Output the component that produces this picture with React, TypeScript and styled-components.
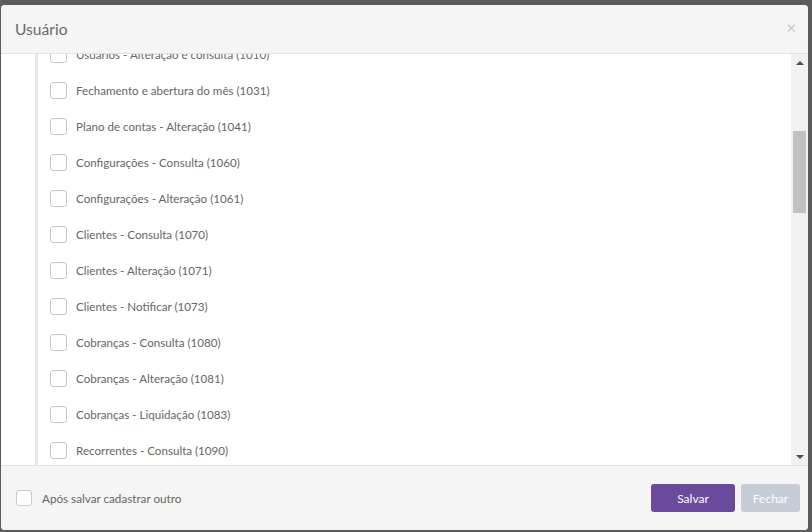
import React, { useLayoutEffect, useRef } from "react";
import styled, { createGlobalStyle } from "styled-components";

const GlobalStyle = createGlobalStyle`
  html, body {
    margin: 0;
    padding: 0;
    width: 812px;
    height: 532px;
    overflow: hidden;
    font-family: Lato, "Open Sans", sans-serif;
  }
`;

const permissions = [
  "Empresa - Consulta (1000)",
  "Empresa - Alteração (1001)",
  "Painel - Consulta (1002)",
  "Relatórios - Consulta (1003)",
  "Relatórios - Exportação (1004)",
  "Contas bancárias - Consulta (1005)",
  "Contas bancárias - Alteração (1006)",
  "Usuários - Consulta (1009)",
  "Usuários - Alteração e consulta (1010)",
  "Fechamento e abertura do mês (1031)",
  "Plano de contas - Alteração (1041)",
  "Configurações - Consulta (1060)",
  "Configurações - Alteração (1061)",
  "Clientes - Consulta (1070)",
  "Clientes - Alteração (1071)",
  "Clientes - Notificar (1073)",
  "Cobranças - Consulta (1080)",
  "Cobranças - Alteração (1081)",
  "Cobranças - Liquidação (1083)",
  "Recorrentes - Consulta (1090)",
  "Recorrentes - Alteração (1091)",
  "Fornecedores - Consulta (1100)",
  "Fornecedores - Alteração (1101)",
  "Contas a pagar - Consulta (1110)",
  "Contas a pagar - Alteração (1111)",
  "Contas a pagar - Liquidação (1113)",
  "Contas a receber - Consulta (1120)",
  "Contas a receber - Alteração (1121)",
  "Contas a receber - Liquidação (1123)",
  "Fluxo de caixa - Consulta (1130)",
];

const Backdrop = styled.div`
  width: 812px;
  height: 532px;
  box-sizing: border-box;
  padding: 5px 4px 2px 1px;
  background: #5c5c5c;
  display: flex;
`;

const Modal = styled.div`
  flex: 1;
  display: flex;
  flex-direction: column;
  background: #fff;
  border-radius: 4px;
  overflow: hidden;
`;

const Header = styled.div`
  height: 48px;
  flex-shrink: 0;
  display: flex;
  align-items: center;
  justify-content: space-between;
  padding: 0 12px 0 14px;
  background: #f5f5f5;
  border-bottom: 1px solid #e2e2e2;
`;

const Title = styled.h4`
  margin: 0;
  font-size: 15.6px;
  font-weight: 400;
  color: #6a6a6a;
`;

const Close = styled.span`
  font-size: 17px;
  color: #c8c8c8;
  line-height: 1;
  margin-top: -4px;
`;

const Body = styled.div`
  flex: 1;
  min-height: 0;
  display: flex;
`;

const Viewport = styled.div`
  flex: 1;
  overflow: hidden;
  padding-left: 34px;
`;

const List = styled.div`
  border-left: 3px solid #e8e8e8;
  padding: 10px 0;
`;

const Item = styled.label`
  height: 36px;
  display: flex;
  align-items: center;
  padding-left: 12px;
  font-size: 11.6px;
  color: #666;
`;

const Box = styled.span<{ $size: number; $gap: number }>`
  width: ${(p) => p.$size}px;
  height: ${(p) => p.$size}px;
  border: 1px solid #c9c9c9;
  border-radius: 3px;
  background: #fff;
  margin-right: ${(p) => p.$gap}px;
  flex-shrink: 0;
`;

const Scrollbar = styled.div`
  width: 17px;
  flex-shrink: 0;
  display: flex;
  flex-direction: column;
  background: #f1f1f1;
`;

const Arrow = styled.div`
  height: 17px;
  display: flex;
  align-items: center;
  justify-content: center;
`;

const Track = styled.div`
  flex: 1;
  padding-top: 60px;
`;

const Thumb = styled.div`
  height: 82px;
  margin: 0 2px;
  background: #c1c1c1;
`;

const Footer = styled.div`
  height: 64px;
  flex-shrink: 0;
  display: flex;
  align-items: center;
  justify-content: space-between;
  padding: 0 8px 0 15px;
  background: #f5f5f5;
  border-top: 1px solid #e2e2e2;
`;

const Another = styled.label`
  display: flex;
  align-items: center;
  font-size: 11.7px;
  color: #666;
`;

const Actions = styled.div`
  display: flex;
  gap: 6px;
`;

const Button = styled.button<{ $primary?: boolean }>`
  height: 28px;
  padding: 0;
  width: ${(p) => (p.$primary ? 84 : 59)}px;
  border: none;
  border-radius: 3px;
  font-family: Lato, "Open Sans", sans-serif;
  font-size: 12px;
  color: #fff;
  background: ${(p) => (p.$primary ? "#6a4b9b" : "#c8ccd7")};
`;

const Triangle = ({ up }: { up?: boolean }) => (
  <svg width="8" height="4" viewBox="0 0 8 4">
    <path d={up ? "M0 4h8L4 0z" : "M0 0h8L4 4z"} fill="#505050" />
  </svg>
);

export default function App() {
  const viewRef = useRef<HTMLDivElement>(null);

  useLayoutEffect(() => {
    if (viewRef.current) viewRef.current.scrollTop = 10 + 8 * 36 + 18;
  }, []);

  return (
    <>
      <GlobalStyle />
      <Backdrop>
        <Modal>
          <Header>
            <Title>Usuário</Title>
            <Close>×</Close>
          </Header>
          <Body>
            <Viewport ref={viewRef}>
              <List>
                {permissions.map((p) => (
                  <Item key={p}>
                    <Box $size={15} $gap={9} />
                    {p}
                  </Item>
                ))}
              </List>
            </Viewport>
            <Scrollbar>
              <Arrow>
                <Triangle up />
              </Arrow>
              <Track>
                <Thumb />
              </Track>
              <Arrow>
                <Triangle />
              </Arrow>
            </Scrollbar>
          </Body>
          <Footer>
            <Another>
              <Box $size={14} $gap={10} />
              Após salvar cadastrar outro
            </Another>
            <Actions>
              <Button $primary>Salvar</Button>
              <Button>Fechar</Button>
            </Actions>
          </Footer>
        </Modal>
      </Backdrop>
    </>
  );
}
